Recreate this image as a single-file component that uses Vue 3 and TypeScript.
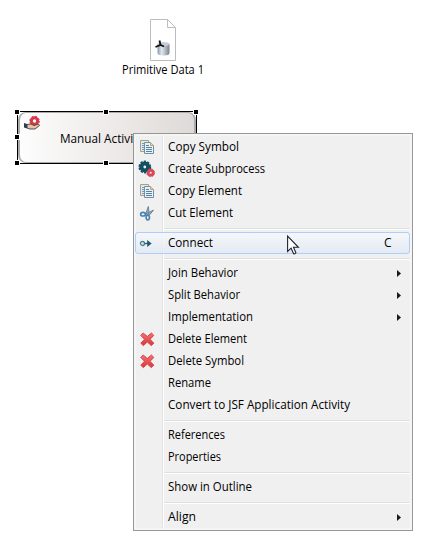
<script setup lang="ts">
type Icon = 'copy' | 'gears' | 'cut' | 'connect' | 'delete'

interface MenuItem {
  label: string
  width: number
  icon?: Icon
  submenu?: boolean
  shortcut?: string
}

const groups: MenuItem[][] = [
  [
    { label: 'Copy Symbol', width: 71, icon: 'copy' },
    { label: 'Create Subprocess', width: 97, icon: 'gears' },
    { label: 'Copy Element', width: 74, icon: 'copy' },
    { label: 'Cut Element', width: 65, icon: 'cut' },
  ],
  [{ label: 'Connect', width: 45, icon: 'connect', shortcut: 'C' }],
  [
    { label: 'Join Behavior', width: 70, submenu: true },
    { label: 'Split Behavior', width: 72, submenu: true },
    { label: 'Implementation', width: 85, submenu: true },
    { label: 'Delete Element', width: 79, icon: 'delete' },
    { label: 'Delete Symbol', width: 76, icon: 'delete' },
    { label: 'Rename', width: 43 },
    { label: 'Convert to JSF Application Activity', width: 182 },
  ],
  [
    { label: 'References', width: 57 },
    { label: 'Properties', width: 53 },
  ],
  [{ label: 'Show in Outline', width: 84 }],
  [{ label: 'Align', width: 28, submenu: true }],
]

const handles = ['nw', 'n', 'ne', 'w', 'e', 'sw', 's', 'se']
</script>

<template>
  <main class="canvas">
    <figure class="data">
      <svg width="27" height="43" viewBox="0 0 27 43">
        <defs>
          <linearGradient id="cyl">
            <stop offset="0" stop-color="#8b97a6" />
            <stop offset=".35" stop-color="#e3e9f0" />
            <stop offset="1" stop-color="#79828e" />
          </linearGradient>
        </defs>
        <path d="M.5.5h17l8 8v33H.5zM17.500.5v8h8" fill="#fff" stroke="#bdbdbd" />
        <path d="M7.500 25v9q0 2.500 6 2.500t6-2.500v-9z" fill="url(#cyl)" />
        <ellipse cx="13.500" cy="25" rx="6" ry="2" fill="#c6ced9" />
        <path d="M9.500 21.500l1 4.500M5.500 28l5-2 3.500 1.500" fill="none" stroke="#111" stroke-width="1.800" />
      </svg>
      <svg class="caption" width="90" height="18">
        <text x="0" y="12" textLength="82" lengthAdjust="spacingAndGlyphs">Primitive Data 1</text>
      </svg>
    </figure>

    <section class="activity">
      <div class="body">
        <svg class="hand" width="18" height="16" viewBox="0 0 18 16">
          <circle cx="11.500" cy="5" r="3.200" fill="none" stroke="#d4394d" stroke-width="3" />
          <circle cx="11.500" cy="5" r="4.800" fill="none" stroke="#d4394d" stroke-width="1" stroke-dasharray="2 1.770" />
          <path d="M4 8.500l4-.5 3 1.500 4.500-1.500 1 1.500-4.500 3.500H7l-3-1z" fill="#e8c3aa" stroke="#4b3d38" stroke-width=".9" />
          <path d="M1 7l3 1v4.500l-3-1z" fill="#20435a" />
        </svg>
        <svg class="name" width="100" height="18">
          <text x="0" y="12" textLength="93" lengthAdjust="spacingAndGlyphs">Manual Activity 1</text>
        </svg>
      </div>
      <i v-for="h in handles" :key="h" class="handle" :class="h"></i>
    </section>

    <nav class="menu">
      <div v-for="(group, g) in groups" :key="g" class="group">
        <div v-for="item in group" :key="item.label" class="row" :class="{ active: item.shortcut }">
          <span class="icon">
            <svg v-if="item.icon === 'copy'" width="16" height="16" viewBox="0 0 16 16">
              <path d="M1.500 1.500h8v11h-8z" fill="#dcebf5" stroke="#ab9f78" />
              <path d="M3 4.500h3M3 6.500h3M3 8.500h3M3 10.500h3" stroke="#6f9cbc" />
              <path d="M5.500 3.500h6l3 3v8h-9z" fill="#e6f1f9" stroke="#748ea3" />
              <path d="M11.500 3.500v3h3" fill="#ecd69b" stroke="#c4a665" />
              <path d="M7 6.500h3M7 8.500h6M7 10.500h6M7 12.500h6" stroke="#5481a6" />
            </svg>
            <svg v-else-if="item.icon === 'gears'" width="18" height="18" viewBox="0 0 18 18">
              <circle cx="6.800" cy="7" r="3.400" fill="none" stroke="#124f61" stroke-width="4" />
              <circle cx="6.800" cy="7" r="5.600" fill="none" stroke="#124f61" stroke-width="1.600" stroke-dasharray="2.300 1.220" />
              <circle cx="12.700" cy="12.800" r="2.400" fill="none" stroke="#d74858" stroke-width="2.800" />
              <circle cx="12.700" cy="12.800" r="3.900" fill="none" stroke="#d74858" stroke-width="1" stroke-dasharray="1.800 1.260" />
            </svg>
            <svg v-else-if="item.icon === 'cut'" width="16" height="16" viewBox="0 0 16 16">
              <path d="M9.300 1.500L10 7l-1 3-2-2zM14.500 5L9 8 6 9l1 1.500 4-1z" fill="#94a9ba" stroke="#687f92" stroke-width=".9" />
              <ellipse cx="4" cy="9.200" rx="2.400" ry="1.800" fill="none" stroke="#4683b4" stroke-width="1.600" />
              <ellipse cx="8.800" cy="12.600" rx="1.700" ry="2.300" fill="none" stroke="#4683b4" stroke-width="1.600" />
            </svg>
            <svg v-else-if="item.icon === 'connect'" width="16" height="16" viewBox="0 0 16 16">
              <circle cx="3.500" cy="8.500" r="2" fill="none" stroke="#4b8295" stroke-width="1.300" />
              <path d="M5.500 8.500h4" stroke="#2c6478" stroke-width="1.400" />
              <path d="M8.200 5l4.500 3.500L8.200 12z" fill="#215a6e" />
            </svg>
            <svg v-else-if="item.icon === 'delete'" width="16" height="16" viewBox="0 0 16 16">
              <defs>
                <linearGradient id="red" x2="0" y2="1">
                  <stop offset="0" stop-color="#f07470" />
                  <stop offset="1" stop-color="#dc343c" />
                </linearGradient>
              </defs>
              <path
                d="M4.200 2L8.300 5.500 12.400 2l2.400 2.400-3.700 3.900 3.700 3.900-2.500 2.400-4-3.600-4 3.600-2.500-2.400 3.700-3.900-3.700-3.900z"
                fill="url(#red)" stroke="#d64449" stroke-linejoin="round"
              />
            </svg>
          </span>
          <svg class="label" width="200" height="18">
            <text x="0" y="12" :textLength="item.width" lengthAdjust="spacingAndGlyphs">{{ item.label }}</text>
          </svg>
          <span v-if="item.shortcut" class="shortcut">{{ item.shortcut }}</span>
          <svg v-if="item.submenu" class="arrow" width="4" height="7" viewBox="0 0 4 7">
            <path d="M0 0l4 3.500L0 7z" fill="#1b1b1b" />
          </svg>
        </div>
      </div>
    </nav>

    <svg class="cursor" width="14" height="21" viewBox="0 0 14 21">
      <path
        d="M.6 1.200v15.300l3.500-3.300 2.500 5.600q1.500.4 2.300-1.100L6.500 12.300h4.900z"
        fill="#fff" stroke="#20222c" stroke-width="1.100"
      />
    </svg>
  </main>
</template>

<style>
body {
  background: #fff;
}
</style>

<style scoped>
.canvas {
  position: relative;
  width: 425px;
  height: 548px;
  overflow: hidden;
  background: #fff;
  color: #000;
  font: 12px/16px 'Open Sans', 'Noto Sans', sans-serif;
}

svg {
  display: block;
  flex: none;
  overflow: visible;
}

.data {
  position: absolute;
  left: 122px;
  top: 19px;
  width: 90px;
  margin: 0;
  display: flex;
  flex-direction: column;
}

.data > svg:first-child {
  margin-left: 28px;
}

.activity {
  position: absolute;
  left: 17px;
  top: 111px;
  width: 180px;
  height: 53px;
  box-sizing: border-box;
  border: 1px solid #000;
}

.body {
  height: 51px;
  box-sizing: border-box;
  border: 2px solid #ababab;
  border-top-width: 1px;
  border-bottom-width: 1px;
  border-radius: 8px;
  background: linear-gradient(90deg, #fdfdfd, #dfdad7);
  display: flex;
}

.hand {
  margin: 3px 0 0 3px;
}

.name {
  margin: 18px 0 0 19px;
}

.handle {
  position: absolute;
  width: 4px;
  height: 4px;
  background: #000;
  outline: 1px solid #fff;
}

.nw, .w, .sw { left: -3px; }
.n, .s { left: 86px; }
.ne, .e, .se { right: -2px; }
.nw, .n, .ne { top: -2px; }
.w, .e { top: 23px; }
.sw, .s, .se { bottom: -2px; }

.menu {
  position: absolute;
  left: 133px;
  top: 133px;
  width: 280px;
  height: 398px;
  box-sizing: border-box;
  border: 1px solid #979797;
  padding: 2px;
  background:
    linear-gradient(#e2e3e3, #e2e3e3) 28px 2px / 1px 392px no-repeat,
    linear-gradient(#fff, #fff) 29px 2px / 1px 392px no-repeat,
    #f0f0f0;
  box-shadow: inset 0 0 0 2px #f5f5f5;
}

.group + .group::before {
  content: '';
  display: block;
  height: 1px;
  margin: 4px 0 2px 28px;
  border-top: 1px solid #e0e0e0;
  background: #fff;
}

.row {
  height: 22px;
  display: flex;
  align-items: center;
}

.active {
  margin: 0 0 0 -1px;
  box-sizing: border-box;
  border: 1px solid #aecff7;
  border-radius: 3px;
  background: linear-gradient(rgba(246, 248, 251, 0.8), rgba(225, 233, 244, 0.8));
}

.icon {
  width: 18px;
  margin-left: 2px;
  display: flex;
  justify-content: center;
}

.label {
  margin-left: 12px;
  padding-top: 1px;
  box-sizing: border-box;
}

text {
  font: 12px 'Open Sans', 'Noto Sans', sans-serif;
  fill: #000;
}

.shortcut {
  margin-left: 16px;
}

.arrow {
  margin-left: 29px;
}

.cursor {
  position: absolute;
  left: 287px;
  top: 235px;
}
</style>
